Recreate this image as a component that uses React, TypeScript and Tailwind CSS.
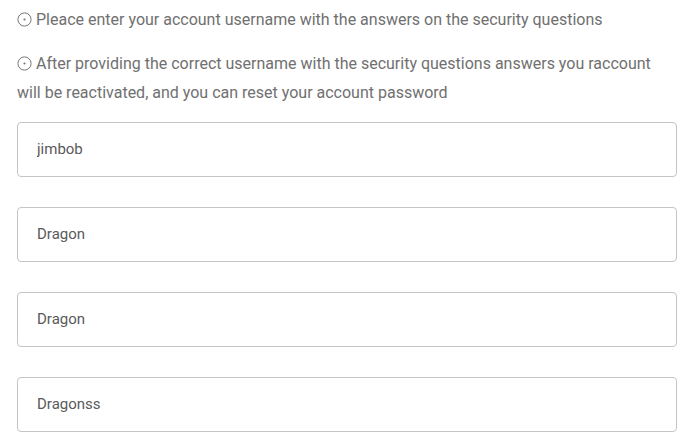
import React from 'react';

const answers = ['jimbob', 'Dragon', 'Dragon', 'Dragonss'];

function DotCircle() {
  return (
    <svg width="15" height="15" viewBox="0 0 15 15" className="inline-block align-[-2px] mr-[4px]">
      <circle cx="7.5" cy="7.5" r="6.6" fill="none" stroke="#777" strokeWidth="1" />
      <circle cx="7.5" cy="7.5" r="1.1" fill="#777" />
    </svg>
  );
}

export default function App() {
  const [values, setValues] = React.useState(answers);

  return (
    <div className="pl-[17px] pr-[19px] pt-[5px] font-['Roboto',sans-serif] text-[#707070]">
      <p className="text-[16px] leading-[29px]">
        <DotCircle />
        Pleace enter your account username with the answers on the security questions
      </p>
      <p className="mt-[15px] text-[16px] leading-[29px]">
        <DotCircle />
        After providing the correct username with the security questions answers you raccount will be reactivated, and you can reset your account password
      </p>

      <div className="mt-[15px] flex flex-col gap-[30px]">
        {values.map((v, i) => (
          <input
            key={i}
            value={v}
            onChange={e => setValues(values.map((x, j) => (j === i ? e.target.value : x)))}
            className="h-[55px] w-full rounded-[4px] border border-[#c4c4c4] bg-white px-[19px] pb-[1px] text-[15px] text-[#5a5a5a] outline-none"
          />
        ))}
      </div>
    </div>
  );
}
